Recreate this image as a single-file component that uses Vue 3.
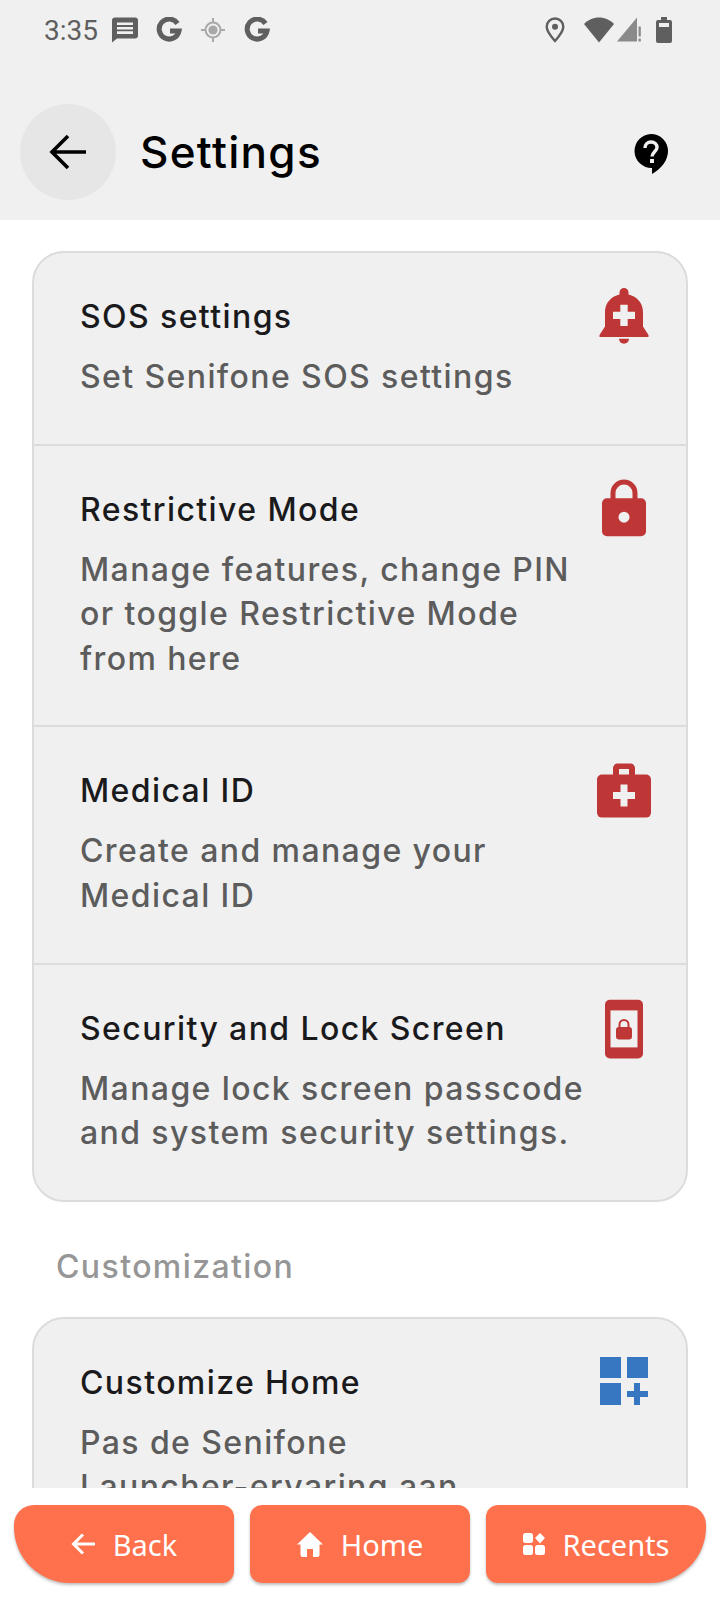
<template>
  <div class="screen">
    <header class="top">
      <div class="status">
        <div class="status-left">
          <span class="time">3:35</span>
          <svg class="st msg" viewBox="0 0 26 25"><path d="M3 0h20a3 3 0 0 1 3 3v15a3 3 0 0 1-3 3H5l-5 4V3a3 3 0 0 1 3-3z" fill="#5f5f5f"/><path d="M5 5h16v2.6H5zM5 9.4h16V12H5zM5 13.8h16v2.6H5z" fill="#f0f0f0"/></svg>
          <svg class="st g1" viewBox="0 0 26 26"><path d="M21.5 6.5A10 10 0 1 0 23 14h-9" fill="none" stroke="#5f5f5f" stroke-width="5"/></svg>
          <svg class="st cross" viewBox="0 0 24 24"><circle cx="12" cy="12" r="7.5" fill="none" stroke="#a8a8a8" stroke-width="2"/><circle cx="12" cy="12" r="4.6" fill="#a8a8a8"/><path d="M12 0v4M12 20v4M0 12h4M20 12h4" stroke="#a8a8a8" stroke-width="2"/></svg>
          <svg class="st g2" viewBox="0 0 26 26"><path d="M21.5 6.5A10 10 0 1 0 23 14h-9" fill="none" stroke="#5f5f5f" stroke-width="5"/></svg>
        </div>
        <div class="status-right">
          <svg class="st pin" viewBox="0 0 20 26"><path d="M10 1.5a8.3 8.3 0 0 1 8.3 8.3c0 5-4.2 9.6-8.3 14.2C5.9 19.4 1.7 14.8 1.7 9.8A8.3 8.3 0 0 1 10 1.5z" fill="none" stroke="#5f5f5f" stroke-width="2.4"/><circle cx="10" cy="9.8" r="3" fill="#5f5f5f"/></svg>
          <svg class="st wifi" viewBox="0 0 30 25"><path d="M0 6.5C4 2.5 9 0 15 0s11 2.5 15 6.5L15 25z" fill="#5f5f5f"/></svg>
          <svg class="st signal" viewBox="0 0 24 25"><path d="M20 0v24H0z" fill="#8a8a8a"/><path d="M21.5 9h2.300v10h-2.300zM21.5 21h2.300v3h-2.300z" fill="#8a8a8a"/></svg>
          <svg class="st batt" viewBox="0 0 16 26"><path d="M5 0h6v3h3a2 2 0 0 1 2 2v19a2 2 0 0 1-2 2H2a2 2 0 0 1-2-2V5a2 2 0 0 1 2-2h3z" fill="#5f5f5f"/><rect x="3" y="6" width="10" height="4" fill="#f0f0f0"/></svg>
        </div>
      </div>
      <div class="toolbar">
        <button class="back-circle">
          <svg viewBox="0 0 38 36" width="38" height="36"><path d="M37 18H3M19 2 3 18l16 16" fill="none" stroke="#000" stroke-width="3.6"/></svg>
        </button>
        <h1>Settings</h1>
        <svg class="help" viewBox="0 0 34 40" width="34" height="40"><path d="M17 0a17 17 0 0 1 17 17c0 9-6 17-16 23v-6A17 17 0 0 1 17 0z" fill="#000"/><path d="M11 14c0-3.5 2.5-6 6-6s6 2.3 6 5.500c0 4-5 4.500-5 9" fill="none" stroke="#f0f0f0" stroke-width="3.4"/><rect x="16" y="25" width="4" height="4" fill="#f0f0f0"/></svg>
      </div>
    </header>

    <main class="content">
      <section class="card">
        <div v-for="row in rows" :key="row.title" class="row">
          <div class="text">
            <div class="title">{{ row.title }}</div>
            <div class="sub">{{ row.sub }}</div>
          </div>
          <svg class="icon" viewBox="0 0 64 64" width="64" height="64">
            <g v-if="row.icon === 'bell'" fill="#bf3636">
              <path d="M33 3a4.5 4.5 0 0 1 4.5 4.5v2C46 11.5 52 18 52 27v14.5l5.500 8.500v2H8.500v-2l5.500-8.500V27c0-9 6-15.500 14.500-17.500v-2A4.500 4.500 0 0 1 33 3z"/>
              <path d="M28 53.7h10a5 5 0 0 1-10 0z"/>
              <path d="M29.3 19.7h7.400v7h7.300v7.400h-7.300v7h-7.400v-7H22v-7.400h7.300z" fill="#f0f0f0"/>
            </g>
            <g v-else-if="row.icon === 'lock'" fill="#bf3636">
              <path d="M22 22v-7a11 11 0 0 1 22 0v7" fill="none" stroke="#bf3636" stroke-width="5"/>
              <rect x="11" y="20.2" width="44" height="38" rx="5"/>
              <circle cx="33" cy="39.2" r="5.5" fill="#f0f0f0"/>
            </g>
            <g v-else-if="row.icon === 'kit'" fill="#bf3636">
              <path d="M22 18V9a4.400 4.400 0 0 1 4.400-4.400h13.200A4.400 4.400 0 0 1 44 9v9h-6v-8H28v8z"/>
              <rect x="6" y="15.6" width="54" height="43" rx="5"/>
              <path d="M29.5 25.6h7v7.500H44v7h-7.500v7.500h-7v-7.500H22v-7h7.500z" fill="#f0f0f0"/>
            </g>
            <g v-else fill="#bf3636">
              <rect x="14" y="2.7" width="38" height="58.7" rx="5"/>
              <rect x="19.5" y="13.4" width="27" height="37" fill="#f0f0f0"/>
              <path d="M28.5 31v-3.500a4.500 4.500 0 0 1 9 0V31" fill="none" stroke="#bf3636" stroke-width="2"/>
              <rect x="25" y="30" width="16" height="12.4" rx="3"/>
            </g>
          </svg>
        </div>
      </section>

      <div class="section-label">Customization</div>

      <section class="card">
        <div class="row">
          <div class="text">
            <div class="title">Customize Home</div>
            <div class="sub">{{ "Pas de Senifone\nLauncher-ervaring aan" }}</div>
          </div>
          <svg class="icon" viewBox="0 0 64 64" width="64" height="64">
            <g fill="#3776c0">
              <rect x="9" y="6" width="21" height="21"/>
              <rect x="36" y="6" width="21" height="21"/>
              <rect x="9" y="32" width="21" height="22"/>
              <path d="M43 32h6v8h8v6h-8v8h-6v-8h-7v-6h7z"/>
            </g>
          </svg>
        </div>
      </section>
    </main>

    <nav class="bottom">
      <button class="nav-btn first">
        <svg viewBox="0 0 24 22" width="24" height="22"><path d="M24 11H3M12 1.5 2.5 11l9.500 9.500" fill="none" stroke="#fff" stroke-width="3"/></svg>
        <span>Back</span>
      </button>
      <button class="nav-btn">
        <svg viewBox="0 0 26 25" width="26" height="25"><path d="M13 0 26 12.5h-3.500V23a2 2 0 0 1-2 2H16v-8h-6v8H5.500a2 2 0 0 1-2-2V12.500H0z" fill="#fff"/></svg>
        <span>Home</span>
      </button>
      <button class="nav-btn last">
        <svg viewBox="0 0 22 22" width="22" height="22"><rect x="0" y="0" width="10" height="10" rx="2.5" fill="#fff"/><path d="M17 0l5 5-5 5.500L12 5z" fill="#fff"/><rect x="0" y="12" width="10" height="10" rx="2.5" fill="#fff"/><rect x="12" y="12" width="10" height="10" rx="2.5" fill="#fff"/></svg>
        <span>Recents</span>
      </button>
    </nav>
  </div>
</template>

<script setup>
const rows = [
  { title: "SOS settings", sub: "Set Senifone SOS settings", icon: "bell" },
  { title: "Restrictive Mode", sub: "Manage features, change PIN\nor toggle Restrictive Mode\nfrom here", icon: "lock" },
  { title: "Medical ID", sub: "Create and manage your\nMedical ID", icon: "kit" },
  { title: "Security and Lock Screen", sub: "Manage lock screen passcode\nand system security settings.", icon: "phone" },
];
</script>

<style>
body {
  background: #fff;
}
</style>

<style scoped>
.screen {
  display: flex;
  flex-direction: column;
  width: 720px;
  height: 1600px;
  overflow: hidden;
  background: #fff;
  font-family: Inter, "Noto Sans", sans-serif;
}

.top {
  flex: none;
  height: 220px;
  background: #f0f0f0;
}

.status {
  display: flex;
  justify-content: space-between;
  align-items: center;
  height: 26px;
  padding: 17px 48px 0 44px;
}

.status-left,
.status-right {
  display: flex;
  align-items: center;
}

.time {
  width: 56px;
  font-family: Roboto, sans-serif;
  font-size: 28px;
  color: #5f5f5f;
}

.st {
  display: block;
  height: 26px;
}

.msg {
  width: 26px;
  margin-left: 12px;
}

.g1 {
  width: 26px;
  margin-left: 18px;
}

.cross {
  width: 24px;
  margin-left: 19px;
}

.g2 {
  width: 26px;
  margin-left: 19px;
}

.pin {
  width: 20px;
}

.wifi {
  width: 30px;
  margin-left: 19px;
}

.signal {
  width: 24px;
  margin-left: 3px;
}

.batt {
  width: 16px;
  margin-left: 15px;
}

.toolbar {
  display: flex;
  align-items: center;
  padding: 61px 52px 0 20px;
}

.back-circle {
  display: flex;
  align-items: center;
  justify-content: center;
  width: 96px;
  height: 96px;
  padding: 0;
  border: none;
  border-radius: 50%;
  background: #e6e6e6;
}

h1 {
  flex: 1;
  margin: 0 0 0 24px;
  font-size: 44px;
  font-weight: 500;
  letter-spacing: 1.3px;
  color: #000;
}

.help {
  margin-top: 4px;
}

.content {
  flex: 1;
  min-height: 0;
  overflow: hidden;
  padding: 31px 32px 0;
}

.card {
  border: 2px solid #dcdcdc;
  border-radius: 32px;
  background: #f0f0f0;
  overflow: hidden;
}

.row {
  display: flex;
  justify-content: space-between;
  padding: 32px 31px 0 46px;
  border-bottom: 2px solid #dcdcdc;
}

.row:last-child {
  border-bottom: none;
}

.text {
  padding: 8px 0 44.4px;
}

.title {
  font-size: 32px;
  line-height: 48px;
  font-weight: 500;
  letter-spacing: 1.4px;
  color: #1a1a1d;
}

.sub {
  margin-top: 14px;
  font-size: 32px;
  line-height: 44.4px;
  font-weight: 500;
  letter-spacing: 1.4px;
  color: #5c5c5c;
  white-space: pre-line;
}

.icon {
  flex: none;
  overflow: visible;
}

.section-label {
  margin: 43px 0 28px 24px;
  font-size: 32px;
  line-height: 44px;
  font-weight: 500;
  letter-spacing: 1.4px;
  color: #969696;
}

.bottom {
  flex: none;
  display: flex;
  gap: 16px;
  box-sizing: border-box;
  height: 112px;
  padding: 17px 14px 0;
  background: #fff;
}

.nav-btn {
  display: flex;
  align-items: center;
  justify-content: center;
  gap: 18px;
  flex: 1;
  height: 78px;
  padding: 0;
  border: none;
  border-radius: 12px;
  background: #ff704d;
  box-shadow: 0 2px 3px rgba(0, 0, 0, 0.25);
  color: #fff;
  font-family: "Noto Sans", sans-serif;
  font-size: 29px;
}

.first {
  border-radius: 20px 12px 12px 56px;
}

.last {
  border-radius: 12px 20px 56px 12px;
}
</style>
